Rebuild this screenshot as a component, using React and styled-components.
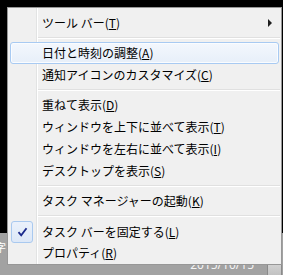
import React from "react"
import styled, { createGlobalStyle } from "styled-components"

const GlobalStyle = createGlobalStyle`
  html, body {
    margin: 0;
    padding: 0;
    background: #000;
  }
  body {
    width: 283px;
    height: 275px;
    overflow: hidden;
    font-family: "Noto Sans CJK JP", "Noto Sans", sans-serif;
  }
`

const Desktop = styled.div`
  position: relative;
  width: 283px;
  height: 275px;
  background: #000;
  display: flex;
  flex-direction: column;
  justify-content: flex-end;
  overflow: hidden;
`

const Taskbar = styled.div`
  height: 42px;
  background: #a2a2a2;
  display: flex;
  align-items: flex-end;
  justify-content: space-between;
  color: #fff;
  font-size: 12px;
`

const LangBar = styled.span`
  margin-left: -5px;
  margin-bottom: 22px;
  font-size: 11px;
  line-height: 11px;
`

const TrayRight = styled.div`
  display: flex;
  align-items: flex-end;
  gap: 13px;
`

const Clock = styled.span`
  font-family: "Noto Sans", "Noto Sans CJK JP", sans-serif;
  font-size: 12px;
  line-height: 12px;
  margin-bottom: 4px;
  color: #f4f4f4;
`

const ShowDesktop = styled.span`
  width: 13px;
  height: 12px;
  margin-right: 1px;
  border: 1px solid #8a8a8a;
  border-bottom: none;
  background: linear-gradient(#d4d4d4, #c2c2c2);
`

const Menu = styled.div`
  position: absolute;
  left: 7px;
  top: 7px;
  width: 275px;
  box-sizing: border-box;
  border: 1px solid #979797;
  background: #f0f0f0;
  padding: 4px 0 0;

  &::before,
  &::after {
    content: "";
    position: absolute;
    top: 0;
    bottom: 0;
    width: 1px;
  }
  &::before {
    left: 28px;
    background: #e2e3e3;
  }
  &::after {
    left: 29px;
    background: #ffffff;
  }
`

const Item = styled.div`
  position: relative;
  z-index: 1;
  height: 22px;
  margin: 0 2px;
  box-sizing: border-box;
  border: 1px solid ${(p) => (p.$active ? "#a8caf2" : "transparent")};
  border-radius: 3px;
  background: ${(p) =>
    p.$active ? "linear-gradient(#f3f7fd, #e7eff9)" : "transparent"};
  box-shadow: ${(p) => (p.$active ? "inset 0 0 0 1px #fafcff" : "none")};
  display: grid;
  grid-template-columns: 22px 1fr 12px;
  column-gap: 9px;
  align-items: center;
  font-size: 12px;
  line-height: 14px;
  color: #000;
  white-space: nowrap;

  u {
    text-underline-offset: 1px;
  }
`

const Slot = styled.span`
  display: flex;
  align-items: center;
`

const CheckBox = styled.span`
  width: 22px;
  height: 22px;
  box-sizing: border-box;
  border: 1px solid #a9c9ef;
  border-radius: 3px;
  background: linear-gradient(#eaf1fb, #dde8f7);
  display: flex;
  align-items: center;
  justify-content: center;
`

const Arrow = styled.span`
  display: block;
  width: 0;
  height: 0;
  margin-left: 2px;
  border-top: 4px solid transparent;
  border-bottom: 4px solid transparent;
  border-left: 4px solid #1e1e1e;
`

const Separator = styled.div`
  position: relative;
  z-index: 1;
  height: 8px;
  margin: 0 1px 0 30px;
  display: flex;
  flex-direction: column;
  justify-content: center;

  &::before {
    content: "";
    height: 1px;
    background: #e0e0e0;
  }
  &::after {
    content: "";
    height: 1px;
    background: #ffffff;
  }
`

const Check = () => (
  <svg width="11" height="10" viewBox="0 0 11 10">
    <path
      d="M1.5 5.2 L4.2 8.3 L9.5 1.2"
      fill="none"
      stroke="#1b2a8c"
      strokeWidth="1.8"
    />
  </svg>
)

const MenuItem = ({ label, mnemonic, active, checked, submenu }) => (
  <Item $active={active}>
    <Slot>
      {checked && (
        <CheckBox>
          <Check />
        </CheckBox>
      )}
    </Slot>
    <span>
      {label}(<u>{mnemonic}</u>)
    </span>
    <Slot>{submenu && <Arrow />}</Slot>
  </Item>
)

export default function App() {
  return (
    <>
      <GlobalStyle />
      <Desktop>
        <Taskbar>
          <LangBar>字</LangBar>
          <TrayRight>
            <Clock>2015/10/15</Clock>
            <ShowDesktop />
          </TrayRight>
        </Taskbar>
        <Menu>
          <MenuItem label="ツール バー" mnemonic="T" submenu />
          <Separator />
          <MenuItem label="日付と時刻の調整" mnemonic="A" active />
          <MenuItem label="通知アイコンのカスタマイズ" mnemonic="C" />
          <Separator />
          <MenuItem label="重ねて表示" mnemonic="D" />
          <MenuItem label="ウィンドウを上下に並べて表示" mnemonic="T" />
          <MenuItem label="ウィンドウを左右に並べて表示" mnemonic="I" />
          <MenuItem label="デスクトップを表示" mnemonic="S" />
          <Separator />
          <MenuItem label="タスク マネージャーの起動" mnemonic="K" />
          <Separator />
          <MenuItem label="タスク バーを固定する" mnemonic="L" checked />
          <MenuItem label="プロパティ" mnemonic="R" />
        </Menu>
      </Desktop>
    </>
  )
}
